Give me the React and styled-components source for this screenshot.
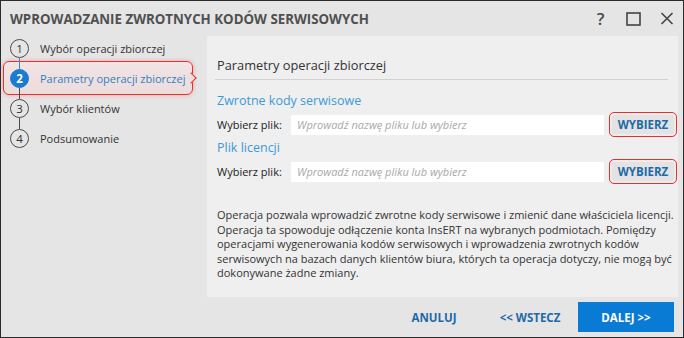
import React from 'react';
import styled, { createGlobalStyle } from 'styled-components';

const GlobalStyle = createGlobalStyle`
  html, body { margin: 0; padding: 0; background: #fff; }
  body { font-family: 'Open Sans', 'Noto Sans', sans-serif; overflow: hidden; }
  * { box-sizing: border-box; }
`;

const Window = styled.div`
  width: 684px;
  height: 338px;
  border: 1px solid #2b2b2b;
  background: #e5e5e5;
  display: flex;
  flex-direction: column;
`;

const TitleBar = styled.div`
  height: 35px;
  display: flex;
  align-items: center;
  padding-left: 9px;
`;

const Title = styled.div`
  flex: 1;
  font-size: 13.3px;
  font-weight: 700;
  color: #505050;
`;

const Controls = styled.div`
  display: flex;
  align-items: center;
`;

const IconBtn = styled.div`
  width: 33px;
  height: 35px;
  display: flex;
  align-items: center;
  justify-content: center;
  color: #4a4a4a;
  font-size: 17px;
  font-weight: 600;
`;

const Body = styled.div`
  flex: 1;
  display: flex;
`;

const Sidebar = styled.div`
  width: 206px;
  display: flex;
  flex-direction: column;
  gap: 6px;
  padding-left: 9px;
`;

const Step = styled.div`
  position: relative;
  height: 24px;
  display: flex;
  align-items: center;
  gap: 11px;
  font-size: 11px;
  color: ${p => (p.active ? '#2f7fc6' : '#333')};

  ${p => p.active && `
    &::before {
      content: '';
      position: absolute;
      left: -7px;
      top: -5px;
      width: 188px;
      height: 32px;
      border: 1.5px solid #e8312f;
      border-radius: 6px;
      background: linear-gradient(#f1e4e4, #eddcdc);
      box-shadow: 0 0 4px rgba(232, 49, 47, 0.35);
      z-index: 0;
    }
    &::after {
      content: '';
      position: absolute;
      left: 177px;
      top: 8px;
      width: 7px;
      height: 7px;
      border-top: 1.5px solid #e8312f;
      border-right: 1.5px solid #e8312f;
      transform: rotate(45deg);
      background: #eedfdf;
      z-index: 0;
    }
  `}
`;

const Circle = styled.div`
  position: relative;
  z-index: 1;
  width: 19px;
  height: 19px;
  border-radius: 50%;
  display: flex;
  align-items: center;
  justify-content: center;
  font-size: 11.5px;
  font-weight: ${p => (p.active ? 700 : 400)};
  border: 1.5px solid ${p => (p.active ? '#1a7bd0' : '#4a4a4a')};
  background: ${p => (p.active ? '#1a7bd0' : 'transparent')};
  color: ${p => (p.active ? '#fff' : '#333')};

  ${p => !p.last && `
    &::after {
      content: '';
      position: absolute;
      left: 7.5px;
      top: 18px;
      width: 1px;
      height: 11px;
      background: ${p.lineBlue ? '#3a86cc' : '#4a4a4a'};
    }
  `}
`;

const StepLabel = styled.span`
  position: relative;
  z-index: 1;
`;

const Main = styled.div`
  flex: 1;
  display: flex;
  flex-direction: column;
  margin-right: 5px;
`;

const Panel = styled.div`
  height: 261px;
  background: #efefef;
  padding-left: 8px;
`;

const PanelTitle = styled.div`
  margin-right: 10px;
  padding: 20px 0 5px 2px;
  line-height: 18px;
  font-size: 12.8px;
  color: #333;
  border-bottom: 1px solid #d2d2d2;
`;

const Content = styled.div`
  padding-left: 2px;
`;

const SectionTitle = styled.div`
  margin-top: ${p => (p.first ? '12px' : '2px')};
  line-height: 17px;
  font-size: 12.5px;
  color: #3c9ad6;
`;

const FileRow = styled.div`
  margin-top: 3px;
  height: 25px;
  display: flex;
  align-items: center;
`;

const Label = styled.div`
  width: 74px;
  font-size: 11px;
  color: #222;
`;

const Input = styled.div`
  width: 313px;
  height: 20px;
  background: #fff;
  display: flex;
  align-items: center;
  padding-left: 6px;
  font-size: 11px;
  font-style: italic;
  color: #a8a8a8;
`;

const PickButton = styled.div`
  margin-left: 5px;
  width: 68px;
  height: 25px;
  border: 1.5px solid #e8312f;
  border-radius: 5px;
  background: #e3e3e3;
  box-shadow: inset 0 0 0 2px #ececec;
  display: flex;
  align-items: center;
  justify-content: center;
  font-size: 11.5px;
  font-weight: 700;
  color: #1d6aa8;
`;

const Info = styled.p`
  margin: 24px 0 0;
  font-size: 11px;
  line-height: 14.6px;
  color: #333;
`;

const Footer = styled.div`
  flex: 1;
  display: flex;
  align-items: center;
  justify-content: flex-end;
  padding-right: 4px;
`;

const FooterButton = styled.div`
  width: 96px;
  height: 30px;
  display: flex;
  align-items: center;
  justify-content: center;
  font-size: 11.5px;
  font-weight: 700;
  background: ${p => (p.primary ? '#0a7bd4' : 'transparent')};
  color: ${p => (p.primary ? '#fff' : '#1d6aa8')};
`;

const steps = ['Wybór operacji zbiorczej', 'Parametry operacji zbiorczej', 'Wybór klientów', 'Podsumowanie'];

const Square = () => (
  <svg width="15" height="14" viewBox="0 0 15 14">
    <rect x="1" y="1" width="13" height="12" fill="none" stroke="#444" strokeWidth="1.6" />
  </svg>
);

const Cross = () => (
  <svg width="14" height="13" viewBox="0 0 14 13">
    <path d="M1.5 1 L12.5 12 M12.5 1 L1.5 12" stroke="#444" strokeWidth="1.6" />
  </svg>
);

const App = () => {
  return (
    <>
      <GlobalStyle />
      <Window>
        <TitleBar>
          <Title>WPROWADZANIE ZWROTNYCH KODÓW SERWISOWYCH</Title>
          <Controls>
            <IconBtn>?</IconBtn>
            <IconBtn><Square /></IconBtn>
            <IconBtn><Cross /></IconBtn>
          </Controls>
        </TitleBar>
        <Body>
          <Sidebar>
            {steps.map((s, i) => (
              <Step key={s} active={i === 1}>
                <Circle active={i === 1} last={i === steps.length - 1} lineBlue={i === 0}>{i + 1}</Circle>
                <StepLabel>{s}</StepLabel>
              </Step>
            ))}
          </Sidebar>
          <Main>
            <Panel>
              <PanelTitle>Parametry operacji zbiorczej</PanelTitle>
              <Content>
                <SectionTitle first>Zwrotne kody serwisowe</SectionTitle>
                <FileRow>
                  <Label>Wybierz plik:</Label>
                  <Input>Wprowadź nazwę pliku lub wybierz</Input>
                  <PickButton>WYBIERZ</PickButton>
                </FileRow>
                <SectionTitle>Plik licencji</SectionTitle>
                <FileRow>
                  <Label>Wybierz plik:</Label>
                  <Input>Wprowadź nazwę pliku lub wybierz</Input>
                  <PickButton>WYBIERZ</PickButton>
                </FileRow>
                <Info>
                  Operacja pozwala wprowadzić zwrotne kody serwisowe i zmienić dane właściciela licencji.<br />
                  Operacja ta spowoduje odłączenie konta InsERT na wybranych podmiotach. Pomiędzy<br />
                  operacjami wygenerowania kodów serwisowych i wprowadzenia zwrotnych kodów<br />
                  serwisowych na bazach danych klientów biura, których ta operacja dotyczy, nie mogą być<br />
                  dokonywane żadne zmiany.
                </Info>
              </Content>
            </Panel>
            <Footer>
              <FooterButton>ANULUJ</FooterButton>
              <FooterButton>&lt;&lt; WSTECZ</FooterButton>
              <FooterButton primary>DALEJ &gt;&gt;</FooterButton>
            </Footer>
          </Main>
        </Body>
      </Window>
    </>
  );
};

export default App;
